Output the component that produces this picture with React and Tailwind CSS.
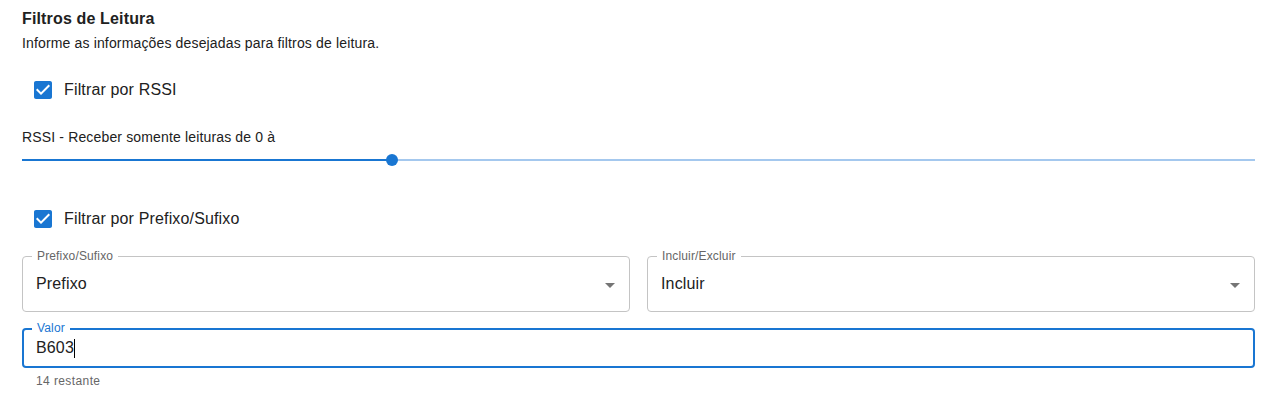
import { useState } from "react";

const CheckIcon = () => (
  <svg viewBox="0 0 24 24" className="w-6 h-6 fill-[#1976d2]">
    <path d="M19 3H5c-1.11 0-2 .9-2 2v14c0 1.1.89 2 2 2h14c1.11 0 2-.9 2-2V5c0-1.1-.89-2-2-2zm-9 14l-5-5 1.41-1.41L10 14.17l7.59-7.59L19 8l-9 9z" />
  </svg>
);

const CheckRow = ({ label }) => (
  <label className="flex items-center h-[42px] pl-[9px] gap-[9px] cursor-pointer">
    <CheckIcon />
    <span className="text-base tracking-[0.15px] text-[#212121]">{label}</span>
  </label>
);

const SelectField = ({ label, value }) => (
  <div className="relative h-[56px] rounded border border-[#c4c4c4] flex items-center pl-[13px]">
    <span className="absolute -top-[8px] left-[9px] bg-white px-[5px] text-xs leading-[14px] tracking-[0.15px] text-[#666]">
      {label}
    </span>
    <span className="text-base tracking-[0.15px] text-[#212121]">{value}</span>
    <svg viewBox="0 0 24 24" className="absolute right-[7px] top-[16px] w-6 h-6 fill-[#757575]">
      <path d="M7 10l5 5 5-5z" />
    </svg>
  </div>
);

export default function App() {
  const [rssi] = useState(true);

  return (
    <div
      className="w-[1287px] h-[401px] bg-white pl-[22px] pr-[32px] pt-[9px]"
      style={{ fontFamily: "'Liberation Sans', Arial, sans-serif" }}
    >
      <h2 className="text-base leading-5 font-bold tracking-[0.15px] text-[#212121]">Filtros de Leitura</h2>
      <p className="mt-1 text-sm leading-5 tracking-[0.15px] text-[#212121]">
        Informe as informações desejadas para filtros de leitura.
      </p>

      <div className="mt-4">{rssi && <CheckRow label="Filtrar por RSSI" />}</div>

      <p className="mt-[17px] text-sm leading-[18px] tracking-[0.15px] text-[#212121]">
        RSSI - Receber somente leituras de 0 à
      </p>
      <div className="relative h-6 mt-[2px] flex items-center">
        <div className="w-full h-[2px] bg-[#a4c8ee]" />
        <div className="absolute left-0 top-[11px] h-[2px] w-[30%] bg-[#1976d2]" />
        <div className="absolute left-[30%] top-[6px] w-3 h-3 -ml-[6px] rounded-full bg-[#1976d2]" />
      </div>

      <div className="mt-[26px]">
        <CheckRow label="Filtrar por Prefixo/Sufixo" />
      </div>

      <div className="mt-[16px] grid grid-cols-2 gap-[17px]">
        <SelectField label="Prefixo/Sufixo" value="Prefixo" />
        <SelectField label="Incluir/Excluir" value="Incluir" />
      </div>

      <div className="mt-[16px] relative h-[40px] rounded border-2 border-[#1976d2] flex items-center pl-[12px]">
        <span className="absolute -top-[9px] left-[8px] bg-white px-[5px] text-xs leading-[14px] tracking-[0.15px] text-[#1976d2]">
          Valor
        </span>
        <span className="text-base tracking-[0.15px] text-[#212121]">B603</span>
        <span className="w-px h-[19px] bg-black" />
      </div>
      <p className="mt-[3px] pl-[14px] text-xs leading-5 tracking-[0.4px] text-[#666]">14 restante</p>
    </div>
  );
}
